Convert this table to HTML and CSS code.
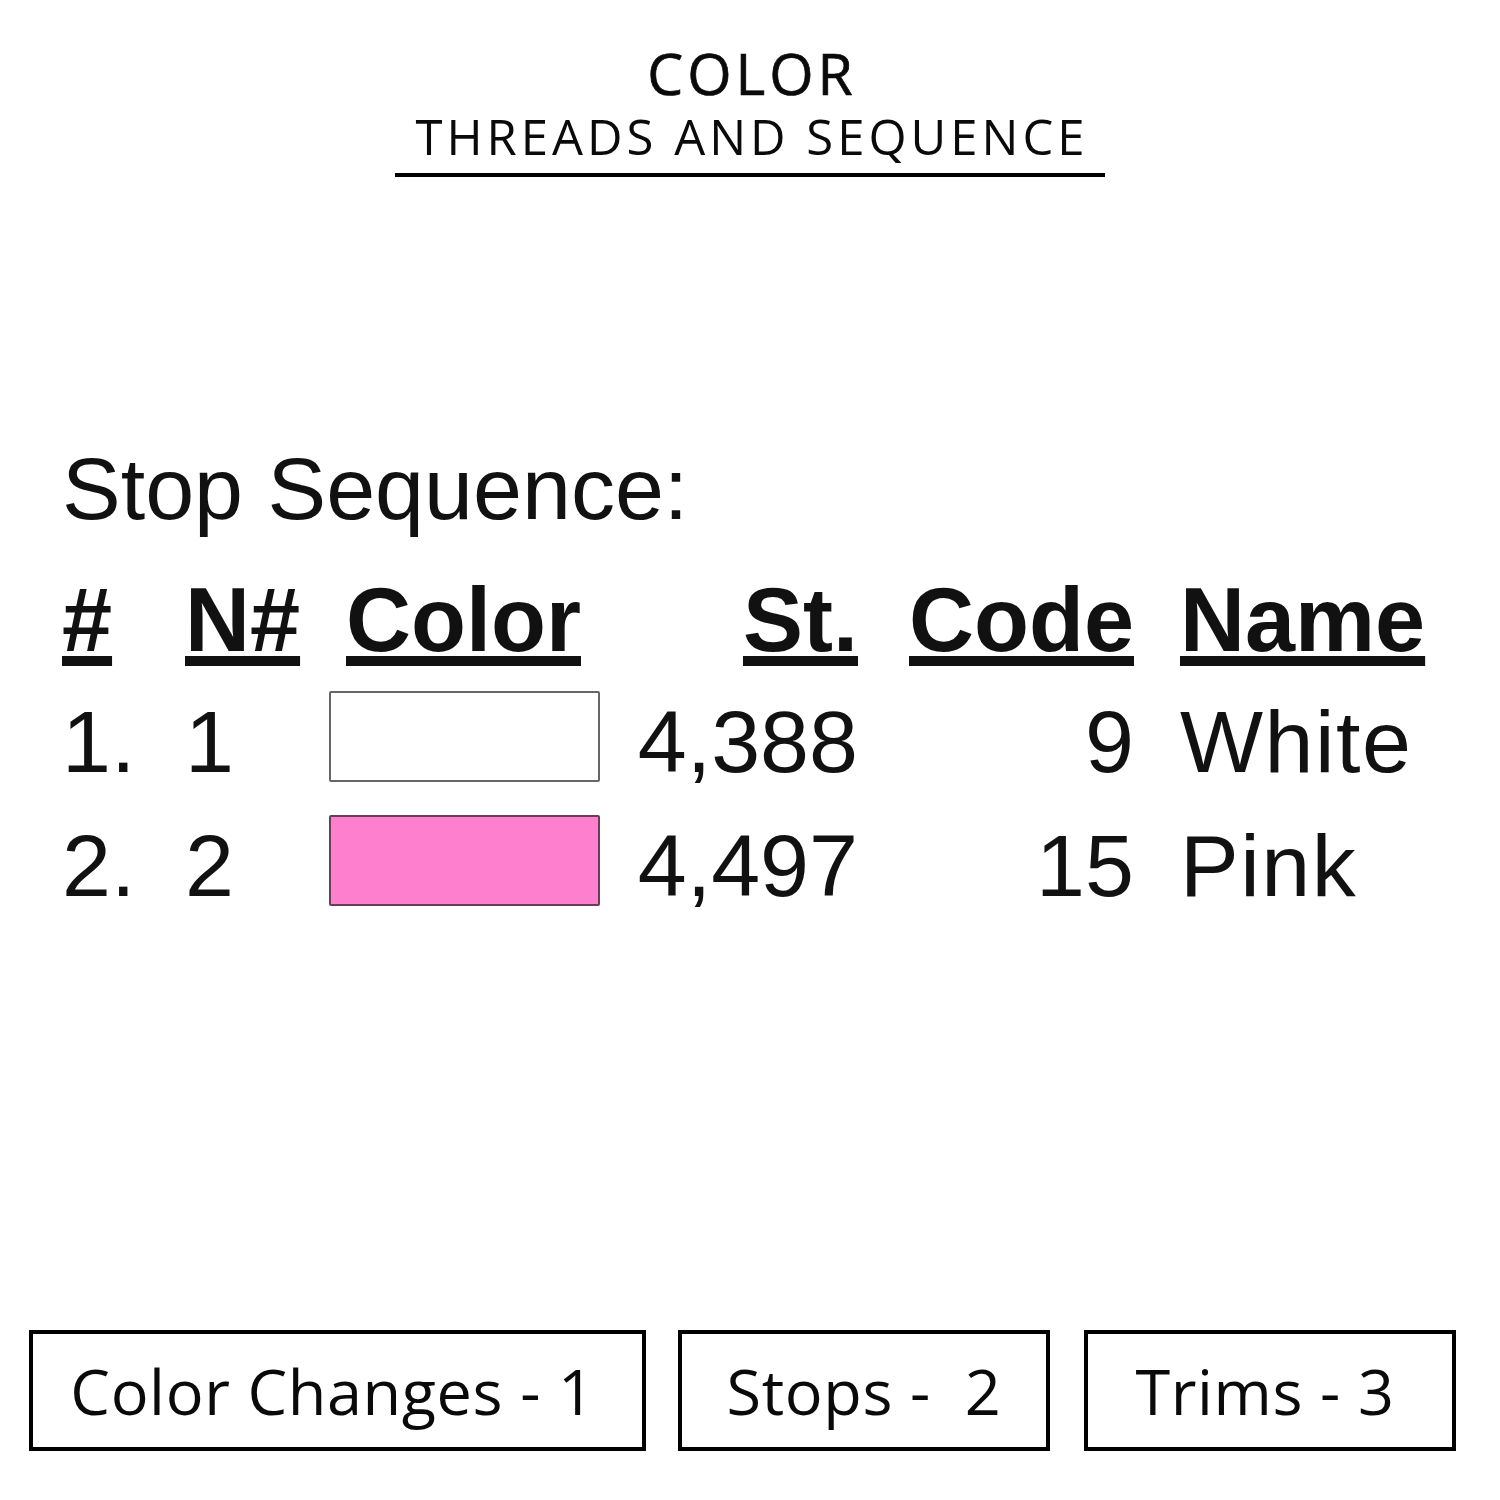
FILE: index.html
```html
<!DOCTYPE html>
<html lang="en">
<head>
<meta charset="utf-8">
<title>Color - Threads and Sequence</title>
<link rel="stylesheet" href="styles.css">
</head>
<body>
<div class="page">
  <header class="head">
    <div class="title">COLOR</div>
    <div class="subtitle">THREADS AND SEQUENCE</div>
  </header>

  <section class="sheet">
    <div class="sheet-title">Stop Sequence:</div>
    <div class="grid">
      <div class="th c1"><span class="u">#</span></div>
      <div class="th c2"><span class="u">N#</span></div>
      <div class="th c3"><span class="u">Color</span></div>
      <div class="th c4"><span class="u">St.</span></div>
      <div class="th c5"><span class="u">Code</span></div>
      <div class="th c6"><span class="u">Name</span></div>

      <div class="td c1">1.</div>
      <div class="td c2">1</div>
      <div class="td c3"><div class="swatch swatch-white"></div></div>
      <div class="td c4">4,388</div>
      <div class="td c5">9</div>
      <div class="td c6">White</div>

      <div class="td c1">2.</div>
      <div class="td c2">2</div>
      <div class="td c3"><div class="swatch swatch-pink"></div></div>
      <div class="td c4">4,497</div>
      <div class="td c5">15</div>
      <div class="td c6">Pink</div>
    </div>
  </section>

  <footer class="stats">
    <div class="stat stat-wide">Color Changes - 1</div>
    <div class="stat stat-mid">Stops -&nbsp; 2</div>
    <div class="stat stat-last">Trims - 3</div>
  </footer>
</div>
</body>
</html>
```

FILE: styles.css
```css
* { box-sizing: border-box; }
html, body { margin: 0; padding: 0; background: #fff; }
body { color: #000; }

.page {
  width: 1500px;
  height: 1500px;
  display: flex;
  flex-direction: column;
}

.head {
  display: flex;
  flex-direction: column;
  align-items: center;
  padding-top: 45px;
  font-family: "Open Sans", "Liberation Sans", sans-serif;
}
.title {
  font-size: 57px;
  line-height: 56px;
  font-weight: 400;
  -webkit-text-stroke: 0.7px #0a0a0a;
  letter-spacing: 4px;
  margin-right: -4px;
  color: #0a0a0a;
}
.subtitle {
  margin-top: 11px;
  font-size: 49px;
  line-height: 48px;
  font-weight: 400;
  letter-spacing: 4px;
  padding: 0 16px 13px 20px;
  border-bottom: 4px solid #000;
  color: #0a0a0a;
}

.sheet {
  font-family: "Liberation Sans", Arial, sans-serif;
  padding-left: 62px;
  margin-top: 268px;
}
.sheet-title {
  font-size: 88px;
  line-height: 88px;
  color: #111;
}
.grid {
  margin-top: 28px;
  display: grid;
  grid-template-columns: 123px 144px 290px 239px 276px auto;
  grid-template-rows: 119px 124px 124px;
  font-size: 88px;
  line-height: 124px;
  color: #111;
}
.th {
  font-weight: 700;
  font-size: 90px;
  line-height: 119px;
}
.u {
  text-decoration: underline;
  text-decoration-thickness: 10px;
  text-underline-offset: 5px;
}
.c3.th { padding-left: 17px; }
.c4, .c5 { text-align: right; }
.c6 { padding-left: 46px; }
.td.c6 { letter-spacing: 1.5px; }

.swatch {
  width: 271px;
  height: 91px;
  margin-top: 11px;
  border-radius: 2px;
}
.swatch-white { background: #fff; border: 2px solid #666; }
.swatch-pink { background: #ff7fcf; border: 2px solid #6b3d58; }

.stats {
  margin-top: auto;
  padding: 0 0 49px 29px;
  display: flex;
  gap: 32px;
  font-family: "Open Sans", "Liberation Sans", sans-serif;
}
.stat {
  width: 372px;
  height: 121px;
  border: 4px solid #000;
  display: flex;
  align-items: center;
  justify-content: center;
  font-size: 63px;
  line-height: 1;
  letter-spacing: 0.6px;
  color: #0a0a0a;
}
.stat-wide { width: 617px; padding-right: 10px; }
.stat-last { margin-left: 2px; padding-right: 10px; }
```
